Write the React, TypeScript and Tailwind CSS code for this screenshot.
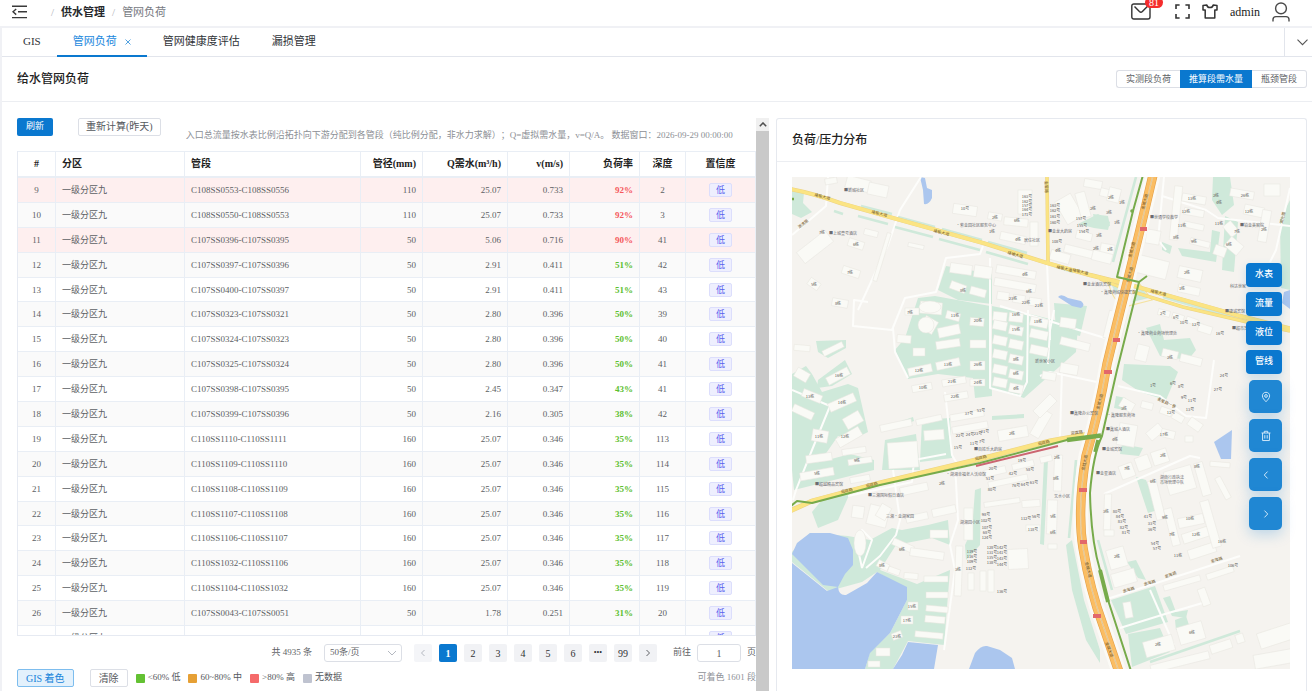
import { useState } from "react";
import type { ReactNode } from "react";

const FONT = "font-['Liberation_Serif','Noto_Sans_CJK_SC',serif]";

type Row = [number, string, number, string, string, number, number];

const rows: Row[] = [
  [9, "C108SS0553-C108SS0556", 110, "25.07", "0.733", 92, 2],
  [10, "C108SS0550-C108SS0553", 110, "25.07", "0.733", 92, 3],
  [11, "C107SS0396-C107SS0395", 50, "5.06", "0.716", 90, 41],
  [12, "C107SS0397-C107SS0396", 50, "2.91", "0.411", 51, 42],
  [13, "C107SS0400-C107SS0397", 50, "2.91", "0.411", 51, 43],
  [14, "C107SS0323-C107SS0321", 50, "2.80", "0.396", 50, 39],
  [15, "C107SS0324-C107SS0323", 50, "2.80", "0.396", 50, 40],
  [16, "C107SS0325-C107SS0324", 50, "2.80", "0.396", 50, 41],
  [17, "C107SS0398-C107SS0395", 50, "2.45", "0.347", 43, 41],
  [18, "C107SS0399-C107SS0396", 50, "2.16", "0.305", 38, 42],
  [19, "C110SS1110-C110SS1111", 160, "25.07", "0.346", 35, 113],
  [20, "C110SS1109-C110SS1110", 160, "25.07", "0.346", 35, 114],
  [21, "C110SS1108-C110SS1109", 160, "25.07", "0.346", 35, 115],
  [22, "C110SS1107-C110SS1108", 160, "25.07", "0.346", 35, 116],
  [23, "C110SS1106-C110SS1107", 160, "25.07", "0.346", 35, 117],
  [24, "C110SS1032-C110SS1106", 160, "25.07", "0.346", 35, 118],
  [25, "C110SS1104-C110SS1032", 160, "25.07", "0.346", 35, 119],
  [26, "C107SS0043-C107SS0051", 50, "1.78", "0.251", 31, 20],
  [27, "C107SS0042-C107SS0043", 50, "1.78", "0.251", 31, 21],
];

const columns = [
  { label: "#", col: "w-[38px]", align: "text-center" },
  { label: "分区", col: "w-[129px]", align: "text-left" },
  { label: "管段", col: "w-[176px]", align: "text-left" },
  { label: "管径(mm)", col: "w-[62px]", align: "text-right" },
  { label: "Q需水(m³/h)", col: "w-[85px]", align: "text-right" },
  { label: "v(m/s)", col: "w-[62px]", align: "text-right" },
  { label: "负荷率", col: "w-[70px]", align: "text-right" },
  { label: "深度", col: "w-[46px]", align: "text-center" },
  { label: "置信度", col: "w-[70px]", align: "text-center" },
];

function TopBar() {
  return (
    <header className="flex h-[26px] shrink-0 items-center bg-white pr-[22px] pb-[3px] pl-3">
      <button aria-label="收起菜单">
        <svg width="15" height="14" viewBox="0 0 15 14" fill="none" stroke="#3a3a3a" strokeWidth="1.4">
          <path d="M0 1.2H15M6 6.8H15M0 12.6H15M4.2 4L1 6.8L4.2 9.6" />
        </svg>
      </button>
      <nav className="ml-6 flex flex-1 items-center gap-[7px] text-[11px] leading-4">
        <span className="text-[#b0b3ba]">/</span>
        <a href="#" className="font-bold text-[#26282c]">供水管理</a>
        <span className="text-[#b0b3ba]">/</span>
        <span className="text-[#76797f]">管网负荷</span>
      </nav>
      <div className="flex h-full items-center">
        <button aria-label="消息" className="relative mr-6">
          <svg width="20" height="17" viewBox="0 0 20 17" fill="none" stroke="#333" strokeWidth="1.4">
            <rect x="0.8" y="1" width="18.2" height="15" rx="2" />
            <path d="M3.5 3.5L8.4 8.6Q9.9 10 11.4 8.6L16.3 3.5" />
          </svg>
          <span className="absolute -top-[6px] left-[14px] rounded-full bg-[#f52c2c] px-1 text-[10px] leading-[11px] text-white">
            81
          </span>
        </button>
        <button aria-label="全屏" className="mr-3">
          <svg width="15" height="15" viewBox="0 0 15 15" fill="none" stroke="#333" strokeWidth="1.6">
            <path d="M1 5V1H4.6M10.4 1H14V5M14 10V14H10.4M4.6 14H1V10" />
          </svg>
        </button>
        <button aria-label="主题" className="mr-3">
          <svg width="16" height="15" viewBox="0 0 16 15" fill="none" stroke="#333" strokeWidth="1.5" strokeLinejoin="round">
            <path d="M1 1.500L4.800 1Q5.400 3.600 8 3.600T11.200 1L15 1.500V6H12.800V14H3.200V6H1Z" />
          </svg>
        </button>
        <span className="mr-3 text-[12px] leading-4 text-[#222]">admin</span>
        <svg width="18" height="20" viewBox="0 0 18 20" fill="none" stroke="#4a4a4a" strokeWidth="1.4">
          <circle cx="9" cy="6.4" r="5.4" />
          <path d="M1 19.4V17.6Q1 14.6 4 14.6H14Q17 14.6 17 17.6V19.4" />
        </svg>
      </div>
    </header>
  );
}

function TabBar() {
  const tabs = ["GIS", "管网负荷", "管网健康度评估", "漏损管理"];
  const [active, setActive] = useState(1);
  return (
    <div className="flex h-[29px] shrink-0 border-b border-[#e2e5ec] bg-white">
      <div className="-mb-px flex flex-1 pl-[5px]">
        {tabs.map((tab, i) => (
          <button
            key={tab}
            onClick={() => setActive(i)}
            className={
              i === active
                ? "flex items-center gap-2 border-b-2 border-[#0a78cf] px-4 text-[11px] text-[#1a88dd]"
                : "flex items-center border-b-2 border-transparent px-4 text-[11px] text-[#303338]"
            }
          >
            {tab}
            {i === active && (
              <svg width="6" height="6" viewBox="0 0 6 6" stroke="#3f98de" strokeWidth="0.9">
                <path d="M0.5 0.5L5.5 5.5M5.5 0.5L0.5 5.5" />
              </svg>
            )}
          </button>
        ))}
      </div>
      <button aria-label="更多标签" className="flex w-7 items-center justify-end border-l border-[#e2e5ec] pr-1">
        <svg width="11" height="7" viewBox="0 0 11 7" fill="none" stroke="#555" strokeWidth="1.1">
          <path d="M0.5 0.7L5.5 5.7L10.5 0.7" />
        </svg>
      </button>
    </div>
  );
}

function TitleBar() {
  return (
    <div className="flex h-[45px] shrink-0 items-center justify-between border-b border-[#eceef2] pr-[5px] pl-[15px]">
      <h1 className="text-[12px] font-medium text-[#222]">给水管网负荷</h1>
      <div className="flex h-[18px] items-stretch text-[9px] leading-4 text-[#606266]">
        <button className="rounded-l-[3px] border border-r-0 border-[#dcdfe6] px-[9px]">实测段负荷</button>
        <button className="bg-[#0a78cf] px-[9px] text-white">推算段需水量</button>
        <button className="rounded-r-[3px] border border-l-0 border-[#dcdfe6] px-[9px]">瓶颈管段</button>
      </div>
    </div>
  );
}

function SegmentTable() {
  return (
    <div className="min-h-0 flex-1 overflow-hidden border-b border-l border-[#e6eaf2]">
      <table className="h-[500px] w-full table-fixed border-separate border-spacing-0 text-[9px] leading-3 text-[#5c5f64]">
        <colgroup>
          {columns.map((c) => (
            <col key={c.label} className={c.col} />
          ))}
        </colgroup>
        <thead>
          <tr className="h-[27px]">
            {columns.map((c) => (
              <th
                key={c.label}
                className={`border-t border-r border-b-2 border-[#e9eef5] px-[6px] text-[10px] font-bold whitespace-nowrap text-[#222] ${c.align}`}
              >
                {c.label}
              </th>
            ))}
          </tr>
        </thead>
        <tbody>
          {rows.map(([no, pipe, dia, q, v, load, depth]) => {
            const warn = load >= 90 && no % 2 === 1;
            const cells: ReactNode[] = [
              no,
              "一级分区九",
              pipe,
              dia,
              q,
              v,
              <b className={load > 80 ? "text-[#f5585c]" : "text-[#5cc02f]"}>{load}%</b>,
              depth,
              <span className="inline-block rounded-[2px] border border-[#dcdefc] bg-[#eeeffe] px-[6px] text-[#5a62ee]">
                低
              </span>,
            ];
            return (
              <tr key={no} className={warn ? "bg-[#feefef]" : no % 2 === 0 ? "bg-[#fafafa]" : "bg-white"}>
                {cells.map((cell, i) => (
                  <td key={i} className={`border-r border-b border-[#e9eef5] px-[6px] py-0 ${columns[i].align}`}>
                    {cell}
                  </td>
                ))}
              </tr>
            );
          })}
        </tbody>
      </table>
    </div>
  );
}

function Chevron({ d, color = "#606266" }: { d: string; color?: string }) {
  return (
    <svg width="8" height="8" viewBox="0 0 8 8" fill="none" stroke={color} strokeWidth="1">
      <path d={d} />
    </svg>
  );
}

function Pagination() {
  const pages = ["1", "2", "3", "4", "5", "6", "•••", "99"];
  return (
    <div className="flex h-[18px] shrink-0 items-center justify-end text-[9px] text-[#606266]">
      <span className="mr-3 whitespace-nowrap">共 4935 条</span>
      <label className="relative mr-3 flex items-center">
        <select
          aria-label="每页条数"
          className="h-[18px] w-[78px] appearance-none rounded-[3px] border border-[#dcdfe6] bg-white pl-[5px] text-[9px]"
        >
          <option>50条/页</option>
          <option>100条/页</option>
        </select>
        <span className="pointer-events-none absolute right-[6px]">
          <Chevron d="M0 2L4 6L8 2" color="#b4b8c0" />
        </span>
      </label>
      <div className="flex gap-[7px]">
        <button aria-label="上一页" className="flex h-[18px] w-[18px] items-center justify-center rounded-[2px] bg-[#f4f5f8]">
          <Chevron d="M5.5 1L2.5 4L5.5 7" color="#b4b8c0" />
        </button>
        {pages.map((p) => (
          <button
            key={p}
            className={
              p === "1"
                ? "h-[18px] w-[18px] rounded-[2px] bg-[#0a78cf] text-[10px] font-bold text-white"
                : p === "•••"
                  ? "h-[18px] w-[18px] rounded-[2px] bg-[#f1f2f5] text-[8px] text-[#303133]"
                  : "h-[18px] w-[18px] rounded-[2px] bg-[#f1f2f5] text-[10px] text-[#303133]"
            }
          >
            {p}
          </button>
        ))}
        <button aria-label="下一页" className="flex h-[18px] w-[18px] items-center justify-center rounded-[2px] bg-[#f1f2f5]">
          <Chevron d="M2.5 1L5.5 4L2.5 7" />
        </button>
      </div>
      <label className="ml-4 flex items-center gap-[6px] whitespace-nowrap">
        前往
        <input
          defaultValue="1"
          className="h-[18px] w-11 rounded-[3px] border border-[#dcdfe6] text-center text-[10px]"
        />
        页
      </label>
    </div>
  );
}

function Legend() {
  const items = [
    { color: "bg-[#63c132]", text: "<60% 低" },
    { color: "bg-[#e6a035]", text: "60~80% 中" },
    { color: "bg-[#f56a6a]", text: ">80% 高" },
    { color: "bg-[#bfc3d0]", text: "无数据" },
  ];
  return (
    <div className="mt-[7px] mb-[4px] flex h-[18px] shrink-0 items-center text-[10px] text-[#55585d]">
      <button className="h-full rounded-[2px] border border-[#7dbdee] bg-[#e3f1fc] px-2 text-[#1583da]">GIS 着色</button>
      <button className="mr-2 ml-4 h-full rounded-[2px] border border-[#dcdfe6] px-2 text-[#55585d]">清除</button>
      <ul className="flex flex-1 gap-2 text-[9px]">
        {items.map((it) => (
          <li key={it.text} className="flex items-center gap-[3px] whitespace-nowrap">
            <span className={`h-[9px] w-[9px] rounded-[1px] ${it.color}`} />
            {it.text}
          </li>
        ))}
      </ul>
      <span className="text-[9px] whitespace-nowrap text-[#909399]">可着色 1601 段</span>
    </div>
  );
}

function LoadPanel() {
  return (
    <section className="flex min-h-0 min-w-0">
      <div className="flex min-w-0 flex-1 flex-col overflow-hidden">
        <div className="flex h-[33px] shrink-0 items-start text-[9px]">
          <button className="h-[18px] shrink-0 rounded-[2px] bg-[#0a78cf] px-[9px] text-white">刷新</button>
          <button className="mx-[25px] h-[18px] shrink-0 rounded-[2px] border border-[#dcdfe6] px-[7px] text-[10px] leading-4 text-[#55585d]">
            重新计算(昨天)
          </button>
          <p className="self-center leading-3 whitespace-nowrap text-[#8c8f95] [text-spacing-trim:space-all]">
            入口总流量按水表比例沿拓扑向下游分配到各管段（纯比例分配，非水力求解）；Q=虚拟需水量，v=Q/A。 数据窗口：2026-09-29 00:00:00
          </p>
        </div>
        <SegmentTable />
        <div className="h-2 shrink-0" />
        <Pagination />
        <Legend />
      </div>
      <div className="flex w-[13px] shrink-0 flex-col bg-[#c9c9c9]" aria-hidden="true">
        <div className="flex h-[13px] items-center justify-center bg-[#f0f0f0]">
          <svg width="8" height="5" viewBox="0 0 8 5" fill="none" stroke="#505050" strokeWidth="1.6">
            <path d="M0.8 4.2L4 1L7.2 4.2" />
          </svg>
        </div>
      </div>
    </section>
  );
}

/* ---- map ---- */

const parks = [
  "792,190 804,193 803,203 812,212 801,218 792,214",
  "905,338 918,298 935,296 990,306 992,396 975,398 973,378 938,374 908,379 895,350",
  "946,266 992,274 992,304 958,300 938,290",
  "992,306 1030,314 1078,326 1076,352 1024,398 992,388",
  "816,341 846,340 846,348 828,358 818,352",
  "818,380 845,360 852,374 832,386 817,388",
  "792,374 806,366 812,374 822,392 848,384 858,388 868,432 852,440 838,436 820,462 850,454 874,460 874,470 810,486 794,490 792,470",
  "822,500 850,493 838,520 818,528 812,512",
  "792,552 810,533 848,536 870,540 892,528 902,530 928,525 948,520 950,545 932,538 896,545 880,570 917,584 950,570 944,645 908,641 893,669 865,669 870,652 890,633 907,600 905,588 877,572 862,582 840,588 828,591 792,562",
  "975,490 981,488 980,545 966,560 965,545 972,530",
  "1078,224 1098,214 1110,222 1108,230 1094,228",
  "1093,214 1108,216 1110,226 1096,228",
  "1054,303 1087,306 1080,336 1056,330",
  "1213,177 1230,177 1234,205 1222,215 1212,200",
  "1178,248 1210,252 1212,230 1220,232 1216,262 1182,256",
  "1225,216 1238,222 1234,272 1222,270",
  "1162,242 1172,246 1170,254 1162,250",
  "1280,220 1290,200 1290,290 1281,288",
  "1146,328 1160,324 1164,340 1190,338 1196,350 1188,360 1160,356",
  "1124,364 1170,366 1178,372 1166,400 1140,392 1122,380",
  "1066,545 1072,540 1084,600 1100,650 1100,663 1086,640 1072,590",
  "1136,477 1146,480 1158,510 1148,513",
  "1111,600 1155,586 1168,622 1126,634",
  "1128,634 1160,628 1170,652 1132,667",
  "1163,598 1170,596 1176,612 1188,610 1186,618 1172,616",
  "1175,620 1186,616 1190,628 1176,630",
  "1122,444 1143,448 1139,456 1120,454",
  "1116,396 1126,398 1124,410 1114,408",
  "893,424 913,417 914,421 895,428",
  "885,440 916,434 920,470 882,470",
  "922,420 950,418 952,458 920,462",
  "992,416 1024,414 1024,418 992,420",
  "1044,545 1048,460 1044,460 1040,544",
  "1127,562 1136,560 1146,580 1138,578",
];

// x, y, w, h, rotation
const buildings: [number, number, number, number, number][] = [
  [846, 178, 24, 12, 14], [868, 184, 20, 12, 12], [825, 178, 12, 6, -10],
  [797, 240, 36, 14, -38], [848, 240, 16, 8, 18], [842, 268, 18, 8, 18], [808, 280, 12, 8, 35], [832, 299, 16, 8, 10],
  [880, 232, 4, 50, 17], [864, 230, 14, 6, 14], [908, 244, 16, 4, 12], [953, 205, 24, 10, 8], [988, 213, 14, 7, 10],
  [1004, 218, 24, 8, 6], [1000, 234, 26, 8, 12], [1018, 190, 14, 24, 0], [1030, 222, 8, 24, 0],
  [950, 264, 22, 10, 8], [974, 266, 18, 12, 8], [996, 268, 40, 8, 10], [994, 281, 42, 8, 10], [997, 292, 12, 8, 8],
  [1013, 295, 12, 8, 8], [1029, 298, 12, 8, 8], [950, 283, 16, 8, 20], [970, 288, 16, 8, 15],
  [920, 302, 22, 12, 5], [922, 318, 14, 14, 30], [905, 308, 14, 7, 0], [897, 335, 14, 8, 5], [913, 348, 12, 8, 0],
  [938, 326, 22, 10, -12], [936, 340, 24, 8, -8], [946, 312, 14, 8, 15], [970, 318, 14, 8, 5], [970, 340, 16, 8, 0],
  [908, 366, 24, 8, -12], [936, 360, 24, 8, -12], [912, 384, 20, 7, -10], [942, 378, 24, 7, -10], [944, 393, 24, 7, -10],
  [970, 361, 15, 9, 0], [970, 379, 15, 7, 0],
  [993, 312, 14, 9, 6], [1009, 313, 14, 9, 6], [993, 321, 14, 9, 12], [1009, 326, 14, 9, 12], [993, 336, 14, 9, 12], [1009, 340, 14, 9, 12],
  [993, 350, 14, 9, 12], [1009, 355, 14, 9, 12], [993, 365, 14, 9, 12], [1009, 370, 14, 9, 12], [993, 378, 14, 9, 12], [1009, 384, 14, 9, 12],
  [1030, 318, 18, 9, 12], [1030, 330, 18, 9, 12], [1030, 346, 18, 9, 12],
  [794, 345, 16, 6, 5], [822, 346, 22, 6, -26], [826, 372, 24, 8, -28], [795, 370, 14, 10, 30], [802, 392, 20, 8, 22], [828, 398, 28, 9, -24],
  [792, 408, 22, 8, 25], [844, 414, 18, 12, -30], [812, 430, 16, 12, 10], [836, 432, 26, 10, -30], [806, 454, 26, 8, -8],
  [842, 448, 24, 6, -8], [848, 458, 24, 6, -8], [800, 470, 34, 8, -10], [850, 476, 20, 6, -10], [880, 422, 32, 7, -12],
  [916, 417, 26, 6, -12], [888, 442, 30, 26, -4], [924, 430, 20, 10, -4], [950, 412, 34, 7, -10], [952, 424, 36, 7, -10],
  [998, 428, 30, 11, -10], [984, 468, 22, 7, -13], [1012, 462, 22, 6, -13], [1040, 456, 12, 6, -13], [988, 478, 40, 6, -12],
  [1036, 410, 10, 28, 30], [1054, 455, 8, 36, 2], [1047, 500, 10, 34, 2],
  [852, 506, 12, 12, 8], [868, 506, 20, 20, 14], [878, 505, 11, 14, 30], [900, 485, 28, 8, -12], [932, 507, 24, 8, -12],
  [906, 514, 22, 7, -12], [930, 530, 18, 8, 0], [892, 542, 22, 7, 24], [910, 550, 34, 8, 8], [877, 562, 12, 7, 28], [888, 568, 12, 6, 20],
  [904, 573, 14, 6, 5], [924, 576, 24, 6, 0], [926, 592, 22, 6, 0], [926, 606, 22, 6, 5], [925, 616, 20, 7, 5], [915, 632, 28, 6, 5],
  [908, 602, 10, 8, 0], [901, 616, 12, 8, 0], [892, 632, 10, 7, -20], [876, 648, 14, 8, 0], [868, 661, 12, 6, 0],
  [955, 546, 7, 50, 2], [964, 508, 9, 32, 0], [968, 573, 6, 17, 0], [980, 571, 6, 20, 0], [988, 570, 6, 22, 0], [1008, 549, 20, 20, -3],
  [984, 500, 36, 5, -8], [1022, 500, 18, 7, -4], [1026, 525, 14, 6, 0],
  [1060, 196, 18, 26, -30], [1078, 192, 10, 26, -15], [1084, 180, 18, 8, 10], [1100, 190, 20, 8, 14], [1050, 252, 20, 10, 16],
  [1076, 232, 16, 8, 14], [1064, 248, 34, 8, 14], [1100, 244, 14, 14, 10], [1092, 252, 20, 10, 14], [1108, 188, 12, 14, 14],
  [1172, 186, 8, 54, 6], [1182, 195, 24, 8, 10], [1184, 209, 20, 7, 10], [1184, 223, 20, 6, 12], [1190, 240, 20, 6, 14],
  [1146, 230, 14, 14, 10], [1136, 258, 32, 18, 14], [1178, 268, 24, 12, 12], [1178, 286, 22, 8, 12], [1230, 190, 24, 8, 10],
  [1244, 206, 20, 10, 12], [1264, 184, 16, 12, 0], [1260, 210, 9, 32, 10], [1224, 224, 14, 10, 50], [1226, 240, 16, 12, 40],
  [1214, 246, 12, 10, 20], [1106, 312, 18, 28, 14], [1060, 318, 16, 10, 8], [1060, 340, 30, 8, 14],
  [1158, 310, 12, 6, 14], [1172, 314, 12, 6, 18], [1186, 318, 12, 6, 20], [1198, 325, 14, 8, 18], [1162, 350, 16, 8, 14],
  [1180, 356, 22, 8, 14], [1136, 345, 12, 16, 14], [1060, 364, 18, 10, 10], [1042, 372, 14, 8, 10],
  [1040, 394, 10, 24, 45], [1120, 400, 14, 10, 30], [1141, 402, 12, 7, 14], [1160, 408, 12, 7, 20], [1172, 414, 12, 7, 30],
  [1188, 420, 14, 9, 35], [1150, 424, 10, 16, 50], [1161, 430, 14, 8, 14], [1118, 424, 18, 22, 10], [1185, 436, 8, 6, 0],
  [1120, 464, 14, 14, -20], [1136, 456, 14, 14, -20], [1152, 450, 16, 14, -18], [1166, 468, 28, 24, -16], [1152, 480, 9, 40, -14],
  [1198, 462, 9, 34, -16], [1220, 476, 6, 24, -28], [1210, 462, 20, 5, 5], [1104, 494, 7, 36, 2], [1104, 530, 10, 6, 0],
  [1178, 516, 26, 10, -12], [1182, 530, 28, 10, -18], [1188, 546, 28, 10, -18], [1168, 508, 8, 38, -14], [1206, 500, 9, 48, -16],
  [1108, 548, 18, 20, -16], [1112, 571, 24, 14, -16], [1163, 580, 38, 6, -16], [1206, 570, 28, 6, -18], [1200, 588, 8, 18, -20],
  [1124, 602, 8, 16, -10], [1144, 638, 30, 16, -16], [1178, 624, 26, 18, -16], [1150, 658, 60, 8, -14], [1210, 642, 22, 9, -18],
  [1236, 634, 8, 9, -18], [1258, 628, 36, 16, -18], [1254, 652, 38, 14, -10], [1048, 544, 9, 5, 0],
];

const minorRoads = [
  "M921 177L900 210L888 245L858 310", "M792 235L826 206L828 177", "M983 246L980 254L946 258L936 292L905 298L892 330L853 326L854 300L868 302",
  "M893 328L895 352L908 378", "M990 258L990 388L1020 396L1027 382L1028 310", "M1047 262L1050 340", "M1000 306L1105 338", "M1106 384L1050 372L1040 376",
  "M792 390L830 406L812 450L796 490L793 500", "M945 392L952 455L956 462", "M955 463L958 520L950 545L955 570L944 650",
  "M893 470L900 520L896 535L880 556L866 568", "M1104 494L1190 456L1200 458", "M1104 600L1240 556", "M1150 590L1174 645", "M1118 386L1160 396L1186 416L1206 418L1214 360",
  "M1062 370L1060 436", "M1164 177L1158 240L1166 250", "M1162 196L1206 210L1218 218L1290 226", "M1290 188L1276 250L1270 262", "M1054 310L1050 330L1048 364",
  "M1120 628L1165 614L1206 602", "M848 496L912 482L914 460L946 454", "M862 568L856 540L862 530L872 540L862 568",
];

const tags: [number, number, string][] = [
  [965, 210, "10号"], [995, 219, "2栋"], [1017, 222, "6栋"], [992, 233, "1栋"], [1018, 241, "4栋"], [856, 246, "6栋"], [850, 274, "7栋"], [814, 286, "5栋"], [838, 305, "8栋"],
  [822, 234, "7栋"], [963, 292, "8栋"], [1025, 276, "4栋"], [1029, 293, "6栋"], [1013, 300, "23栋"], [1026, 304, "22栋"], [1039, 307, "21栋"], [910, 314, "7栋"], [955, 317, "11栋"],
  [978, 322, "20栋"], [1016, 316, "16栋"], [1016, 331, "15栋"], [1038, 323, "18栋"], [1016, 361, "8栋"], [1016, 375, "6栋"], [1016, 390, "4栋"], [978, 366, "26栋"], [948, 366, "13栋"],
  [919, 372, "12栋"], [978, 384, "24栋"], [952, 383, "21栋"], [923, 389, "10栋"], [955, 398, "22栋"], [839, 377, "16栋"], [810, 398, "13栋"], [842, 404, "14栋"], [819, 438, "11栋"],
  [845, 438, "12栋"], [857, 462, "9栋"], [817, 475, "5栋"], [1012, 435, "2栋"], [969, 415, "37号"], [981, 412, "53号"], [960, 437, "22号"], [970, 436, "24号"], [978, 435, "23号"],
  [985, 433, "21号"], [958, 449, "15号"], [974, 445, "11号"], [982, 443, "7号"], [993, 470, "20号"], [1022, 462, "19号"], [990, 480, "51号"], [1013, 475, "42号"], [1030, 471, "58号"],
  [992, 491, "80号"], [1016, 487, "76号"], [1025, 486, "64号"], [1034, 484, "63号"], [942, 485, "2栋"], [902, 551, "6栋"], [882, 567, "8栋"], [912, 608, "15栋"], [907, 622, "17栋"],
  [897, 638, "23栋"], [958, 571, "3栋"], [986, 516, "98号"], [986, 522, "102号"], [987, 529, "107号"], [987, 534, "68号"], [987, 539, "124号"], [1026, 520, "112号"], [1036, 518, "56号"],
  [1033, 531, "118号"], [992, 549, "128号"], [992, 554, "131号"], [992, 559, "135号"], [992, 564, "138号"], [972, 553, "119号"], [972, 558, "116号"], [972, 563, "109号"], [1002, 549, "142号"],
  [1002, 554, "141号"], [1002, 560, "143号"], [1002, 566, "144号"], [971, 570, "112号"], [1002, 593, "136号"], [1111, 199, "2栋"], [1122, 204, "1栋"], [1093, 210, "2栋"], [1109, 214, "3栋"],
  [1027, 198, "163号"], [1027, 203, "162号"], [1027, 207, "157号"], [1027, 211, "164号"], [1027, 216, "171号"],
  [1117, 224, "1栋"], [1099, 237, "3栋"], [1096, 250, "2栋"], [1110, 251, "1栋"], [1057, 243, "108号"], [1058, 252, "4栋"], [1055, 207, "163号"], [1055, 212, "162号"], [1055, 218, "161号"],
  [1055, 224, "160号"], [1081, 220, "157号"], [1082, 227, "155号"], [1084, 233, "154号"], [1192, 200, "13栋"], [1186, 213, "12栋"], [1182, 227, "11栋"], [1176, 239, "8栋"], [1194, 243, "9栋"],
  [1216, 197, "2栋"], [1219, 204, "4栋"], [1245, 197, "26栋"], [1249, 213, "12栋"], [1219, 225, "11栋"], [1237, 233, "7栋"], [1229, 246, "6栋"], [1264, 231, "2栋"], [1187, 274, "2栋"],
  [1182, 290, "1栋"], [1163, 315, "2号"], [1176, 319, "6号"], [1184, 324, "10号"], [1196, 326, "12号"], [1220, 335, "16号"], [1170, 359, "2栋"], [1224, 377, "24号"], [1153, 387, "1号"],
  [1173, 385, "6号"], [1181, 388, "8号"], [1218, 391, "27号"], [1184, 399, "9号"], [1192, 402, "11号"], [1190, 411, "13号"], [1171, 414, "12号"], [1124, 410, "3栋"], [1164, 436, "17栋"],
  [1115, 441, "4栋"], [1163, 457, "2栋"], [1127, 470, "7栋"], [1197, 468, "8栋"], [1153, 483, "6栋"], [1106, 513, "3栋"], [1190, 520, "10栋"], [1196, 536, "12栋"], [1165, 519, "9栋"],
  [1222, 543, "16栋"], [1178, 557, "11栋"], [1117, 513, "80号"], [1120, 518, "84号"], [1122, 523, "83号"], [1124, 529, "82号"], [1126, 534, "81号"], [1148, 518, "41号"], [1152, 525, "33号"],
  [1152, 531, "36号"], [1155, 545, "54号"], [1157, 550, "57号"], [1172, 536, "7栋"], [1158, 646, "2栋"], [1192, 634, "6栋"], [1117, 558, "2栋"], [1233, 567, "106号"], [1053, 518, "5栋"],
  [1053, 534, "6栋"], [1056, 480, "8栋"], [1057, 459, "2栋"],
];

const places: [number, number, string][] = [
  [854, 192, "■新城社区"], [843, 235, "■上城壹号酒店"], [976, 227, "•紫金园社区服务中心"], [1032, 242, "居住社区"], [1045, 363, "新世家小区"], [1060, 233, "■金龙大药房"], [1164, 219, "■世通学校教学"], [1252, 227, "■铂金美容院"],
  [1097, 286, "■金龙酒店宾馆"], [1118, 294, "•鑫隆商城快捷宾馆"], [1157, 335, "•鑫隆商业商场管理处"], [1084, 415, "■鑫隆办公宾馆"], [1121, 417, "•鑫隆服务商场"], [1118, 431, "■鑫城人酒店"], [1112, 451, "■金城宾馆"], [1106, 475, "■金星酒店"],
  [1172, 479, "湖南行政执法"], [1172, 484, "市场管理中队"], [829, 486, "■超越精品宾馆"], [886, 497, "■三湘国际假日酒店"], [900, 518, "三湘·金湖家园"], [988, 451, "■百姓乐大药房"], [966, 476, "•湖湘幸福老人活动馆"], [1062, 498, "艺水小区"],
  [1235, 313, "■捷诚宾馆"], [1238, 288, "科达世家"], [1242, 330, "■超市宾馆"], [970, 524, "湖湘园小区"],
];

const roadNames: [number, number, string, number][] = [
  [822, 198, "珞瑜大道", 14], [879, 215, "珞瑜大道", 14], [941, 234, "珞瑜大道", 14], [1015, 256, "珞瑜大道", 16], [1064, 270, "珞瑜大道", 13], [1080, 273, "珞瑜大道", 13], [1158, 294, "珞瑜大道", 13],
  [1146, 202, "金城大道", -75], [1133, 250, "金城大道", -75], [1131, 275, "金城大道", -75], [1101, 402, "金城大道", -75], [1086, 463, "金城大道", -78], [1087, 570, "金城大道", 76], [1108, 650, "金城大道", 70], [1045, 187, "金星路", 88],
  [847, 492, "迎宾路", -13], [872, 486, "迎宾路", -13], [981, 459, "迎宾路", -13], [1044, 444, "迎宾路", -13], [1077, 434, "迎宾路", -8], [804, 225, "湖滨路", -38], [1166, 404, "金星路一巷", 25],
  [1129, 591, "金海路", -14], [1150, 584, "金海路", -14], [1171, 576, "金海路", -20], [1217, 561, "金海路", -16], [1284, 218, "湖光路", -75],
];

const HIGHWAY = "M1153 175L1140 230L1128 279L1117 323L1107 364Q1099 412 1086 456Q1077 510 1083 548Q1090 590 1103 625L1119 672";
const CITY_ROAD = "M790 189Q812 193 840 203L893 218L983 243L1047 263L1090 275L1130 285L1173 297L1240 316L1292 329";
const SOUTH_ROAD = "M790 511L812 501L880 483L980 459L1050 441L1095 433";

function MapCanvas() {
  return (
    <svg
      viewBox="792 177 498 492"
      preserveAspectRatio="xMidYMid slice"
      className="block h-[492px] w-full bg-[#f5f3ef]"
      role="img"
      aria-label="管网负荷地图"
    >
      <g fill="#cfe9da">
        {parks.map((p) => (
          <polygon key={p} points={p} />
        ))}
      </g>
      <g fill="#abc6ee">
        <path d="M920 177L925 178L927 188L932 190L932 198Q929 205 924 204L923 190Z" />
        <path d="M810 533L797 543L792 554L823 585L838 587L845 574L853 565V550L848 538L830 533Z" />
        <path d="M792 563L827 591L838 587Q839 596 846 595L867 583L877 572L907 587V600L890 633L870 653L865 669H792Z" />
        <path d="M908 642L938 645L934 669H893L902 655Z" />
        <path d="M969 669L975 653Q981 645 987 646L1000 650L1012 658L1015 669Z" />
        <path d="M1214 442L1232 430L1231 459H1221Z" />
        <path d="M1058 297Q1061 293 1068 298L1081 301Q1086 305 1081 308L1072 306Z" />
        <path d="M1290 290L1284 292L1282 303L1290 309Z" />
      </g>
      <g fill="none" stroke="#fdfdfb" strokeWidth="2" strokeLinejoin="round">
        {minorRoads.map((d) => (
          <path key={d} d={d} />
        ))}
      </g>
      <g fill="#fafaf6" stroke="#e7e5df" strokeWidth="0.5">
        {buildings.map(([x, y, w, h, r], i) => (
          <rect key={i} x={x} y={y} width={w} height={h} transform={`rotate(${r} ${x + w / 2} ${y + h / 2})`} />
        ))}
      </g>
      <g fill="#fafaf6" stroke="#e7e5df" strokeWidth="0.5">
        <ellipse cx="930" cy="307" rx="11" ry="6" />
        <circle cx="926" cy="325" r="8" />
        <ellipse cx="860" cy="543" rx="6" ry="13" />
      </g>
      <circle cx="936" cy="451" r="3" fill="#cfe9da" />

      {/* green belts beside the trunk roads */}
      <g fill="none" stroke="#cfe9da" strokeWidth="2.6">
        <path d="M861 206L892 214M898 217L935 227M942 229L982 240M988 242L1027 253M858 216L888 224M895 227L933 237M939 239L980 250M986 252L1028 264M834 211L843 214M1054 266L1073 272" />
        <path d="M1163 297L1245 321M1134 287L1160 294M1136 177L1113 262M1112 318L1098 400M1076 460L1069 538M1098 540L1112 590M1096 620L1112 669" />
        <path d="M1150 662L1240 631" />
      </g>
      <path d="M1128 275Q1118 283 1092 275M1139 283L1152 300L1124 307Q1112 300 1108 281" fill="none" stroke="#f5e2a0" strokeWidth="1.2" />
      <path d="M1110 282L1122 280L1118 298Z M1141 286L1149 298L1132 302Z" fill="#cfe9da" />

      <g fill="none">
        <path d={CITY_ROAD} stroke="#ecd283" strokeWidth="4.4" />
        <path d="M1100 279L1130 291L1183 307L1247 322L1290 331" stroke="#ecd283" strokeWidth="3.4" />
        <path d="M1047 175L1048 263" stroke="#ecd283" strokeWidth="3.6" />
        <path d={SOUTH_ROAD} stroke="#ecd283" strokeWidth="5" />
        <path d={CITY_ROAD} stroke="#fbe483" strokeWidth="3.4" />
        <path d="M1100 279L1130 291L1183 307L1247 322L1290 331" stroke="#fbe483" strokeWidth="2.4" />
        <path d="M1047 175L1048 263" stroke="#fbe483" strokeWidth="2.6" />
        <path d={SOUTH_ROAD} stroke="#fbe483" strokeWidth="4" />
        <path d={HIGHWAY} stroke="#fbfaf6" strokeWidth="15" />
        <path d={HIGHWAY} stroke="#e3a04a" strokeWidth="9.4" />
        <path d={HIGHWAY} stroke="#fbbd62" strokeWidth="8.2" />
        <path d={HIGHWAY} stroke="#f2dfb8" strokeWidth="1.4" />
        <path d={HIGHWAY} stroke="#c79a5e" strokeWidth="0.4" />
      </g>

      <g fill="#e2676b">
        <rect x="1140" y="227" width="7" height="4" />
        <rect x="1113" y="338" width="7" height="4" />
        <rect x="1104" y="370" width="8" height="4" />
        <rect x="1079" y="488" width="8" height="4" />
        <rect x="1080" y="540" width="7" height="4" />
        <rect x="1093" y="614" width="8" height="4" />
      </g>

      <g textAnchor="middle" fontFamily="'Noto Sans CJK SC', sans-serif">
        <g fontSize="4" fill="#5a5a58">
          {tags.map(([x, y, t], i) => (
            <text key={i} x={x} y={y}>{t}</text>
          ))}
        </g>
        <g fontSize="4" fill="#6b6b70">
          {places.map(([x, y, t]) => (
            <text key={t} x={x} y={y}>{t}</text>
          ))}
        </g>
        <g fontSize="4" fill="#6e5427">
          {roadNames.map(([x, y, t, r], i) => (
            <text key={i} x={x} y={y} transform={`rotate(${r} ${x} ${y})`}>{t}</text>
          ))}
        </g>
      </g>

      {/* pipe network coloured by load */}
      <g fill="none" stroke="#77ab4b" strokeWidth="2" strokeLinejoin="round">
        <path d="M1143 175L1133 211L1117 277L1139 282L1147 276" />
        <path d="M1139 282L1117 370L1102 436Q1093 455 1090 493Q1091 540 1100 570L1108 600L1131 671" />
        <path d="M1102 436L1067 440L980 463L880 485L812 503L797 501L791 506" />
        <path d="M1067 440L1101 435.500" strokeWidth="4.500" />
        <path d="M1098 440L1095 452" strokeWidth="3.500" />
        <path d="M1100 570L1108 602" strokeWidth="4" />
        <path d="M792 199H794" strokeWidth="2.400" />
        <circle cx="1132" cy="211" r="0.800" />
      </g>
      <path d="M976 466L1050 448L1058 446" stroke="#cc6671" strokeWidth="2" fill="none" />
    </svg>
  );
}

function MapTools() {
  const layers = ["水表", "流量", "液位", "管线"];
  const tools = [
    { label: "定位", d: "M7 1.5C4.500 1.500 2.800 3.300 2.800 5.700C2.800 8.300 5 10.300 7 12.500C9 10.300 11.200 8.300 11.200 5.700C11.200 3.300 9.500 1.500 7 1.500ZM7 4.200A1.600 1.600 0 1 0 7 7.400A1.600 1.600 0 1 0 7 4.200Z" },
    { label: "删除", d: "M1.800 3.500H12.200M5 3.500V1.500H9V3.500M3 3.500V12.300H11V3.500M5.600 6V10M8.400 6V10" },
    { label: "上一个", d: "M8.800 3L5 7L8.800 11" },
    { label: "下一个", d: "M5.200 3L9 7L5.200 11" },
  ];
  return (
    <div className="absolute top-[86px] right-2 flex flex-col items-end gap-[6px]">
      <div className="flex flex-col gap-[5px]">
        {layers.map((l) => (
          <button
            key={l}
            className="h-6 rounded-[4px] bg-[#0a78cf] px-[9px] text-[9px] font-medium text-white shadow-[0_3px_8px_rgba(10,120,207,0.18)]"
          >
            {l}
          </button>
        ))}
      </div>
      {tools.map((t) => (
        <button
          key={t.label}
          aria-label={t.label}
          className="flex h-[33px] w-[33px] items-center justify-center rounded-[5px] bg-[#2087d3] shadow-[0_4px_14px_rgba(10,120,207,0.25)]"
        >
          <svg width="12" height="12" viewBox="0 0 14 14" fill="none" stroke="#d9ecfa" strokeWidth="1.1">
            <path d={t.d} />
          </svg>
        </button>
      ))}
    </div>
  );
}

function MapPanel() {
  return (
    <section className="min-h-0 min-w-0 overflow-hidden rounded-t-[3px] border border-b-0 border-[#e6e9ef] bg-white">
      <h2 className="flex h-[43px] items-center border-b border-[#eceef2] px-[15px] text-[12px] font-medium text-[#222]">
        负荷/压力分布
      </h2>
      <div className="pt-[15px] pr-4 pl-[15px]">
        <div className="relative">
          <MapCanvas />
          <MapTools />
        </div>
      </div>
    </section>
  );
}

export default function App() {
  return (
    <div className={`flex h-screen flex-col overflow-hidden bg-[#f0f1f5] ${FONT}`}>
      <TopBar />
      <div className="flex min-h-0 flex-1 flex-col pt-[2px] pl-[2px]">
        <TabBar />
        <main className="flex min-h-0 flex-1 flex-col bg-white">
          <TitleBar />
          <div className="grid min-h-0 flex-1 grid-cols-[minmax(0,752fr)_minmax(0,531fr)] grid-rows-[minmax(0,1fr)] gap-[7px] pt-4 pr-[5px] pl-[15px]">
            <LoadPanel />
            <MapPanel />
          </div>
        </main>
      </div>
    </div>
  );
}
